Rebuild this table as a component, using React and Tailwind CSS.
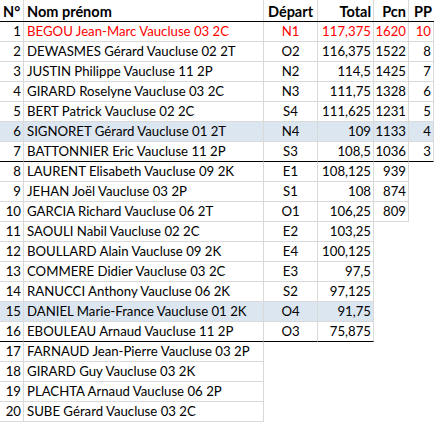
import React from 'react'

const rows = [
  [1, 'BEGOU Jean-Marc Vaucluse 03 2C', 'N1', '117,375', '1620', '10'],
  [2, 'DEWASMES Gérard Vaucluse 02 2T', 'O2', '116,375', '1522', '8'],
  [3, 'JUSTIN Philippe Vaucluse 11 2P', 'N2', '114,5', '1425', '7'],
  [4, 'GIRARD Roselyne Vaucluse 03 2C', 'N3', '111,75', '1328', '6'],
  [5, 'BERT Patrick Vaucluse 02 2C', 'S4', '111,625', '1231', '5'],
  [6, 'SIGNORET Gérard Vaucluse 01 2T', 'N4', '109', '1133', '4'],
  [7, 'BATTONNIER Eric Vaucluse 11 2P', 'S3', '108,5', '1036', '3'],
  [8, 'LAURENT Elisabeth Vaucluse 09 2K', 'E1', '108,125', '939'],
  [9, 'JEHAN Joël Vaucluse 03 2P', 'S1', '108', '874'],
  [10, 'GARCIA Richard Vaucluse 06 2T', 'O1', '106,25', '809'],
  [11, 'SAOULI Nabil Vaucluse 02 2C', 'E2', '103,25'],
  [12, 'BOULLARD Alain Vaucluse 09 2K', 'E4', '100,125'],
  [13, 'COMMERE Didier Vaucluse 03 2C', 'E3', '97,5'],
  [14, 'RANUCCI Anthony Vaucluse 06 2K', 'S2', '97,125'],
  [15, 'DANIEL Marie-France Vaucluse 01 2K', 'O4', '91,75'],
  [16, 'EBOULEAU Arnaud Vaucluse 11 2P', 'O3', '75,875'],
  [17, 'FARNAUD Jean-Pierre Vaucluse 03 2P'],
  [18, 'GIRARD Guy Vaucluse 03 2K'],
  [19, 'PLACHTA Arnaud Vaucluse 06 2P'],
  [20, 'SUBE Gérard Vaucluse 03 2C'],
]

const cols = [
  'w-[24px] text-right pr-[2px]',
  'w-[240px] text-left pl-[3px] whitespace-nowrap',
  'w-[54px] text-center',
  'w-[56px] text-right pr-[2px]',
  'w-[35px] text-right pr-[2px]',
  'w-[25px] text-right pr-[2px]',
]

const widths = ['w-[24px]', 'w-[240px]', 'w-[54px]', 'w-[56px]', 'w-[35px]', 'w-[25px]']

const Row = ({ cells, blue, red, thick }) => (
  <div className="flex h-[20px]">
    {cols.map((c, i) => {
      if (i >= cells.length) return <div key={i} className={widths[i]} />
      return (
        <div
          key={i}
          className={`${c} border-r border-b border-r-[#d9d9d9] ${thick ? 'border-b-black' : 'border-b-[#d9d9d9]'} ${blue ? 'bg-[#dce6f1]' : ''} ${red && i > 0 ? 'text-[#ff0000]' : 'text-black'}`}
        >
          {cells[i]}
        </div>
      )
    })}
  </div>
)

export default function App() {
  return (
    <div className="w-[434px] h-[422px] bg-white overflow-hidden text-[13.2px] leading-[19px]" style={{ fontFamily: 'Lato, sans-serif' }}>
      <div className="flex h-[22px] font-bold text-[14.5px] leading-[23px] border-b border-black">
        <div className="w-[24px] pl-[3px] border-r border-[#d9d9d9]">N°</div>
        <div className="w-[240px] pl-[3px] border-r border-[#d9d9d9]">Nom prénom</div>
        <div className="w-[54px] text-center border-r border-[#d9d9d9]">Départ</div>
        <div className="w-[56px] text-right pr-[2px] border-r border-[#d9d9d9]">Total</div>
        <div className="w-[35px] text-right pr-[2px] border-r border-[#d9d9d9]">Pcn</div>
        <div className="w-[25px] text-right pr-[2px]">PP</div>
      </div>
      {rows.map((r) => (
        <Row
          key={r[0]}
          cells={r}
          red={r[0] === 1}
          blue={r[0] === 6 || r[0] === 15}
          thick={r[0] === 7 || r[0] === 16}
        />
      ))}
    </div>
  )
}
